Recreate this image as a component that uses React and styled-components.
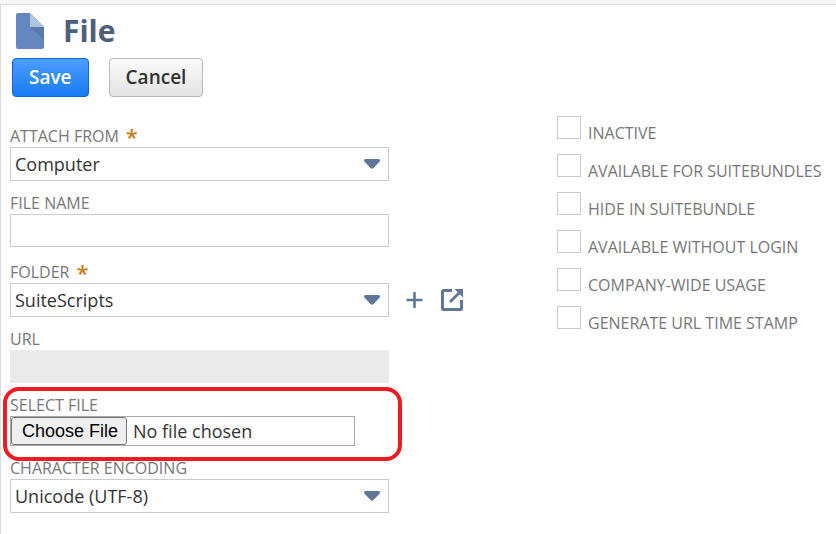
import React, { useState } from "react";
import styled, { createGlobalStyle } from "styled-components";

const GlobalStyle = createGlobalStyle`
  * {
    box-sizing: border-box;
  }

  body {
    margin: 0;
    background: #fff;
    font-family: "Open Sans", "Noto Sans", sans-serif;
    color: #333;
  }
`;

const TopStrip = styled.div`
  height: 4px;
  background: #f7f7f7;
`;

const Page = styled.main`
  min-height: calc(100vh - 4px);
  padding: 8px 12px 20px 9px;
  border-top: 1px solid #e0e0e0;
  border-left: 1px solid #dcdcdc;
`;

const Header = styled.header`
  display: flex;
  align-items: center;
  gap: 19px;
  padding-left: 6px;
  height: 36px;
`;

const Title = styled.h1`
  margin: 0;
  font-size: 30px;
  line-height: 36px;
  font-weight: 700;
  color: #4d5f79;
`;

const ButtonBar = styled.div`
  display: flex;
  gap: 20px;
  margin: 9px 0 19px;
  padding-left: 2px;
`;

const Button = styled.button`
  height: 39px;
  padding: 0 16px 2px;
  border: 1px solid ${(props) => (props.$primary ? "#1467d2" : "#b9b9b9")};
  border-radius: 4px;
  background: ${(props) =>
    props.$primary
      ? "linear-gradient(#4c9dff, #187bf2)"
      : "linear-gradient(#fafafa, #e4e4e4)"};
  color: ${(props) => (props.$primary ? "#fff" : "#333")};
  font-family: inherit;
  font-size: 19px;
  font-weight: 600;
  cursor: pointer;
`;

const Form = styled.form`
  display: grid;
  grid-template-columns: minmax(0, 1fr) 267px;
`;

const Fields = styled.div`
  display: flex;
  flex-direction: column;
  gap: 11px;
  padding-top: 6px;
`;

const Field = styled.div`
  position: relative;
`;

const Label = styled.label`
  display: block;
  padding-top: ${(props) => (props.$required ? "3px" : "0")};
  font-size: 16px;
  line-height: 22px;
  color: #777;
`;

const Star = styled.span`
  display: inline-block;
  height: 22px;
  margin-left: 7px;
  vertical-align: top;
  font-size: 22px;
  font-weight: 600;
  line-height: 22px;
  color: #c77f1a;
`;

const Row = styled.div`
  display: flex;
  align-items: center;
  gap: 17px;
`;

const SelectBox = styled.div`
  position: relative;
  flex: 0 1 379px;

  svg {
    position: absolute;
    top: 12px;
    right: 8px;
    pointer-events: none;
  }
`;

const Select = styled.select`
  display: block;
  width: 100%;
  height: 34px;
  padding: 0 32px 0 4px;
  border: 1px solid #ccc;
  border-radius: 0;
  background: #fff;
  appearance: none;
  color: #333;
  font-family: inherit;
  font-size: 18px;
`;

const TextInput = styled.input`
  display: block;
  width: 100%;
  max-width: 379px;
  height: 33px;
  padding: 0 5px;
  border: 1px solid ${(props) => (props.readOnly ? "#eaeaea" : "#ccc")};
  background: ${(props) => (props.readOnly ? "#eaeaea" : "#fff")};
  font-family: inherit;
  font-size: 18px;
`;

const FileInput = styled.input`
  display: block;
  width: 100%;
  max-width: 345px;
  height: 30px;
  border: 1px solid #a9a9a9;
  color: #333;
  font-family: inherit;
  font-size: 18px;
  line-height: 28px;

  &::file-selector-button {
    height: 28px;
    margin: 0 6px 0 0;
    padding: 0 8px 0 10px;
    border: 1px solid #767676;
    border-radius: 3px;
    background: #efefef;
    color: #000;
    font-family: "Liberation Sans", Arial, sans-serif;
    font-size: 18px;
    vertical-align: top;
  }
`;

/* red outline drawn over the gaps around the file field */
const Highlight = styled.div`
  position: absolute;
  top: -7px;
  left: -7px;
  width: 399px;
  height: 74px;
  border: 4px solid #ed1c24;
  border-radius: 16px;
  pointer-events: none;
`;

const IconButton = styled.button`
  display: flex;
  padding: 0;
  border: 0;
  background: none;
  cursor: pointer;
`;

const Options = styled.div`
  display: flex;
  flex-direction: column;
  gap: 10px;
`;

const Option = styled.label`
  display: flex;
  align-items: flex-end;
  gap: 7px;
  height: 28px;
  font-size: 16px;
  line-height: 22px;
  color: #777;
  white-space: nowrap;
`;

const Checkbox = styled.input`
  align-self: flex-start;
  flex: none;
  width: 24px;
  height: 23px;
  margin: 0;
  border: 1px solid #ccc;
  background: #fff;
  appearance: none;

  &:checked {
    background: #607799;
  }
`;

const FileIcon = () => (
  <svg width="28" height="36" viewBox="0 0 28 36" aria-hidden="true">
    <path d="M2 0h12l14 14v20a2 2 0 0 1-2 2H2a2 2 0 0 1-2-2V2a2 2 0 0 1 2-2z" fill="#6487c0" />
    <path d="M14 14h14v13z" fill="#5a78ab" />
    <path d="M14 0l14 14H14z" fill="#b1c2df" />
  </svg>
);

const Caret = () => (
  <svg width="17" height="10" viewBox="0 0 17 10" aria-hidden="true">
    <path d="M1.5 0h13q1.500 0 1.500 1.300T15 3.200L9.500 9q-1.500 1.400-3 0L1 3.200Q0 2.400 0 1.300T1.500 0z" fill="#607799" />
  </svg>
);

const PlusIcon = () => (
  <svg width="18" height="18" viewBox="0 0 18 18" aria-hidden="true">
    <path d="M8.500 1v16M.5 9h16" stroke="#607799" strokeWidth="2.600" />
  </svg>
);

const OpenIcon = () => (
  <svg width="22" height="22" viewBox="0 0 22 22" aria-hidden="true">
    <path d="M11 1.500H2.500a1 1 0 0 0-1 1v17a1 1 0 0 0 1 1h17a1 1 0 0 0 1-1V11" fill="none" stroke="#607799" strokeWidth="3" />
    <path d="M9 13l9-9" stroke="#607799" strokeWidth="2.800" />
    <path d="M13.500 0H22v8.500z" fill="#607799" />
  </svg>
);

const options = [
  "INACTIVE",
  "AVAILABLE FOR SUITEBUNDLES",
  "HIDE IN SUITEBUNDLE",
  "AVAILABLE WITHOUT LOGIN",
  "COMPANY-WIDE USAGE",
  "GENERATE URL TIME STAMP",
];

const SelectField = ({ id, label, value, required, children }) => (
  <Field>
    <Label htmlFor={id} $required={required}>
      {label}
      {required && <Star>*</Star>}
    </Label>
    <Row>
      <SelectBox>
        <Select id={id} defaultValue={value}>
          <option>{value}</option>
        </Select>
        <Caret />
      </SelectBox>
      {children}
    </Row>
  </Field>
);

const App = () => {
  const [fileName, setFileName] = useState("");

  return (
    <>
      <GlobalStyle />
      <TopStrip />
      <Page>
        <Header>
          <FileIcon />
          <Title>File</Title>
        </Header>
        <ButtonBar>
          <Button type="submit" form="file-form" $primary>
            Save
          </Button>
          <Button type="button">Cancel</Button>
        </ButtonBar>
        <Form id="file-form" onSubmit={(e) => e.preventDefault()}>
          <Fields>
            <SelectField id="attach" label="ATTACH FROM" value="Computer" required />
            <Field>
              <Label htmlFor="name">FILE NAME</Label>
              <TextInput
                id="name"
                type="text"
                value={fileName}
                onChange={(e) => setFileName(e.target.value)}
              />
            </Field>
            <SelectField id="folder" label="FOLDER" value="SuiteScripts" required>
              <IconButton type="button" aria-label="New folder">
                <PlusIcon />
              </IconButton>
              <IconButton type="button" aria-label="Open folder">
                <OpenIcon />
              </IconButton>
            </SelectField>
            <Field>
              <Label htmlFor="url">URL</Label>
              <TextInput id="url" type="text" readOnly />
            </Field>
            <Field>
              <Label htmlFor="file">SELECT FILE</Label>
              <FileInput id="file" type="file" />
              <Highlight />
            </Field>
            <SelectField id="encoding" label="CHARACTER ENCODING" value="Unicode (UTF-8)" />
          </Fields>
          <Options>
            {options.map((option) => (
              <Option key={option}>
                <Checkbox type="checkbox" />
                {option}
              </Option>
            ))}
          </Options>
        </Form>
      </Page>
    </>
  );
};

export default App;
